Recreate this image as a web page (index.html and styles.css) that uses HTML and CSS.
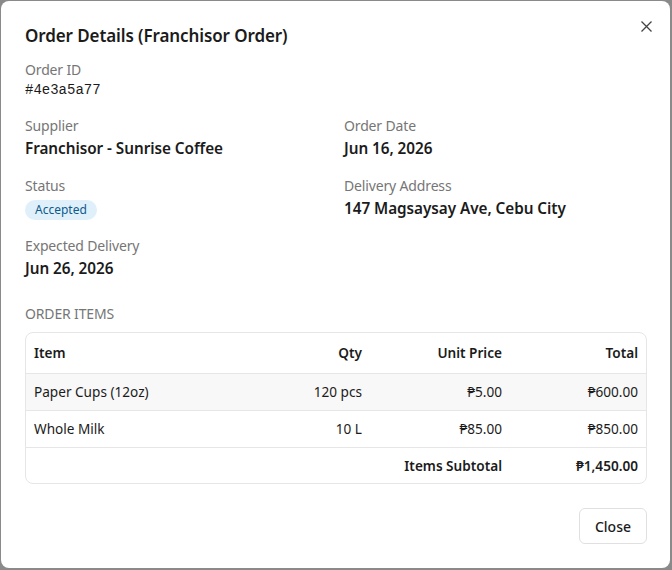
FILE: index.html
```html
<!DOCTYPE html>
<html>
<head>
<meta charset="utf-8">
<link rel="stylesheet" href="styles.css">
</head>
<body>
<div class="dialog">
  <div class="header">
    <h1 class="title">Order Details (Franchisor Order)</h1>
    <button class="x" aria-label="Close">
      <svg width="11" height="11" viewBox="0 0 11 11"><path d="M0.5 0.5L10.5 10.5M10.5 0.5L0.5 10.5" stroke="#444" stroke-width="1.3" fill="none"/></svg>
    </button>
  </div>
  <div class="info">
    <div class="field">
      <div class="label">Order ID</div>
      <div class="mono">#4e3a5a77</div>
    </div>
    <div></div>
    <div class="field">
      <div class="label">Supplier</div>
      <div class="value">Franchisor - Sunrise Coffee</div>
    </div>
    <div class="field">
      <div class="label">Order Date</div>
      <div class="value">Jun 16, 2026</div>
    </div>
    <div class="field">
      <div class="label">Status</div>
      <div><span class="badge">Accepted</span></div>
    </div>
    <div class="field">
      <div class="label">Delivery Address</div>
      <div class="value">147 Magsaysay Ave, Cebu City</div>
    </div>
    <div class="field">
      <div class="label">Expected Delivery</div>
      <div class="value">Jun 26, 2026</div>
    </div>
  </div>
  <div class="section">ORDER ITEMS</div>
  <div class="tablewrap">
    <table>
      <thead>
        <tr><th class="l">Item</th><th>Qty</th><th>Unit Price</th><th>Total</th></tr>
      </thead>
      <tbody>
        <tr class="alt"><td class="l">Paper Cups (12oz)</td><td>120 pcs</td><td>₱5.00</td><td>₱600.00</td></tr>
        <tr><td class="l">Whole Milk</td><td>10 L</td><td>₱85.00</td><td>₱850.00</td></tr>
        <tr class="sub"><td class="l"></td><td></td><td>Items Subtotal</td><td>₱1,450.00</td></tr>
      </tbody>
    </table>
  </div>
  <div class="footer">
    <button class="btn">Close</button>
  </div>
</div>
</body>
</html>
```
FILE: styles.css
```css
* { box-sizing: border-box; }
html, body { margin: 0; padding: 0; }
body {
  background: #8a8a8a;
  width: 672px;
  height: 570px;
  overflow: hidden;
  font-family: "Noto Sans", "Open Sans", sans-serif;
  color: #1b1b1b;
}
.dialog {
  margin: 1px 0 0 1px;
  width: 669px;
  height: 567px;
  background: #fff;
  border-radius: 8px;
  padding: 23px 23px 0 24px;
}
.header {
  display: flex;
  justify-content: space-between;
  align-items: flex-start;
}
.title {
  margin: 0;
  font-size: 17px;
  line-height: 24px;
  font-weight: 560;
  letter-spacing: -0.1px;
}
.x {
  border: 0;
  background: none;
  padding: 0;
  margin: -3px -5px 0 0;
  width: 11px;
  height: 11px;
  display: flex;
}
.info {
  margin-top: 12px;
  display: grid;
  grid-template-columns: 303px 303px;
  column-gap: 16px;
  row-gap: 16px;
}
.label {
  font-size: 14px;
  line-height: 20px;
  color: #767676;
  letter-spacing: -0.15px;
}
.mono {
  font-family: "Liberation Mono", monospace;
  font-size: 14px;
  line-height: 20px;
}
.value {
  font-size: 15.3px;
  line-height: 24px;
  font-weight: 560;
  letter-spacing: -0.05px;
}
.badge {
  display: inline-block;
  margin-top: 4px;
  height: 20px;
  line-height: 20px;
  padding: 0 10px;
  border-radius: 10px;
  background: #dff0fb;
  color: #0d5a8c;
  font-size: 12px;
}
.section {
  margin-top: 24px;
  font-size: 14px;
  line-height: 20px;
  color: #767676;
  letter-spacing: -0.15px;
}
.tablewrap {
  margin-top: 8px;
  border: 1px solid #e6e6e6;
  border-radius: 8px;
  overflow: hidden;
}
table {
  width: 100%;
  border-collapse: collapse;
  font-size: 13.6px;
}
th, td {
  text-align: right;
  padding: 0 8px;
}
th {
  height: 40px;
  font-weight: 560;
  border-bottom: 1px solid #e6e6e6;
}
td {
  height: 37px;
  border-bottom: 1px solid #e6e6e6;
}
tr.sub td { border-bottom: 0; height: 36px; font-weight: 560; }
tr.alt td { background: #f8f8f8; }
.l { text-align: left; }
th:nth-child(1) { width: 200px; }
th:nth-child(2) { width: 144px; }
th:nth-child(3) { width: 140px; }
.footer {
  margin-top: 24px;
  display: flex;
  justify-content: flex-end;
}
.btn {
  font-family: inherit;
  font-size: 14px;
  font-weight: 500;
  color: #1b1b1b;
  background: #fff;
  border: 1px solid #e0e0e0;
  border-radius: 6px;
  height: 36px;
  width: 68px;
  padding: 0;
}
```
